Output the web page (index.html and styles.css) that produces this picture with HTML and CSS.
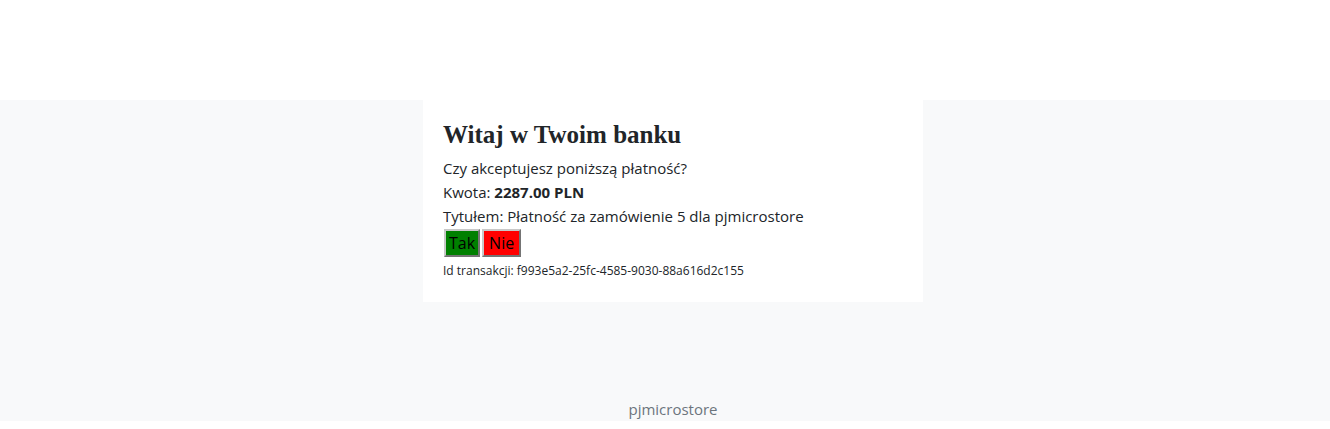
FILE: index.html
```html
<!DOCTYPE html>
<html lang="pl">
<head>
<meta charset="utf-8">
<title>Bank</title>
<link rel="stylesheet" href="styles.css">
</head>
<body>
<header class="top"></header>
<main class="main">
  <section class="card">
    <h1 class="title">Witaj w Twoim banku</h1>
    <p class="line">Czy akceptujesz poniższą płatność?</p>
    <p class="line">Kwota: <strong>2287.00 PLN</strong></p>
    <p class="line">Tytułem: Płatność za zamówienie 5 dla pjmicrostore</p>
    <div class="actions">
      <button class="btn btn-yes">Tak</button>
      <button class="btn btn-no">Nie</button>
    </div>
    <p class="txid">Id transakcji: f993e5a2-25fc-4585-9030-88a616d2c155</p>
  </section>
  <footer class="footer">pjmicrostore</footer>
</main>
</body>
</html>
```
FILE: styles.css
```css
html, body {
  margin: 0;
  padding: 0;
  background: #ffffff;
  color: #212529;
  font-family: "Open Sans", "Noto Sans", sans-serif;
}
.top {
  height: 100px;
}
.main {
  background: #f8f9fa;
  height: 321px;
  box-sizing: border-box;
  padding-left: 16px;
  display: flex;
  flex-direction: column;
  align-items: center;
}
.card {
  width: 500px;
  box-sizing: border-box;
  background: #ffffff;
  padding: 18px 20px 22px 20px;
}
.title {
  margin: 0 0 4px 0;
  font-family: "Liberation Serif", "DejaVu Serif", serif;
  font-weight: bold;
  font-size: 25px;
  line-height: 34px;
}
.line {
  margin: 0;
  font-size: 15px;
  line-height: 24px;
}
.line strong {
  font-weight: 700;
}
.actions {
  display: flex;
  gap: 2px;
  margin: 1px 0 5px 1px;
}
.btn {
  font-family: "Open Sans", "Noto Sans", sans-serif;
  font-size: 16px;
  color: #000;
  height: 28px;
  padding: 0 3px;
  border: 2px outset #c8c8c8;
  line-height: 24px;
}
.btn-yes {
  background: #008000;
}
.btn-no {
  background: #ff0000;
  padding: 0 5px;
}
.txid {
  margin: 0;
  font-size: 12px;
  line-height: 18px;
}
.footer {
  margin-top: auto;
  padding-bottom: 0;
  font-size: 15px;
  line-height: 24px;
  color: #6c757d;
}
```
